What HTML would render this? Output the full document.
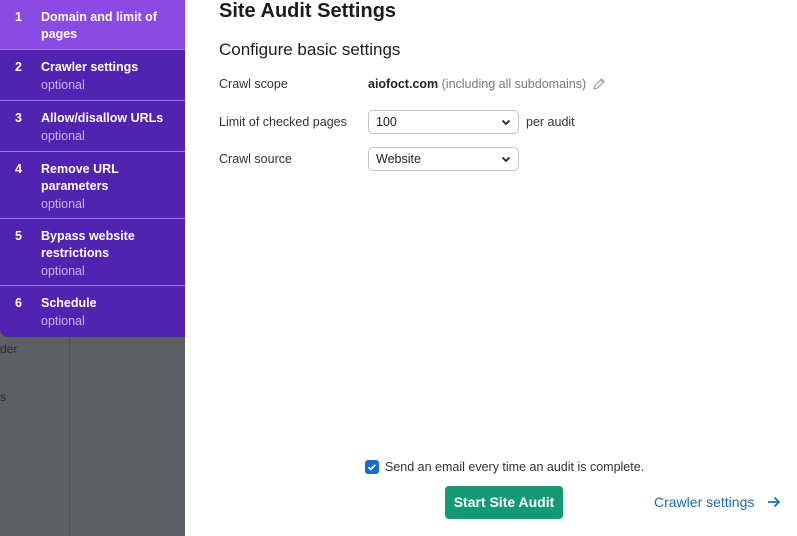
<!DOCTYPE html>
<html><head><meta charset="utf-8"><style>
*{margin:0;padding:0;box-sizing:border-box}
body{width:797px;height:536px;overflow:hidden;background:#fff;font-family:"Liberation Sans",sans-serif;position:relative}
.side{position:absolute;left:0;top:0;width:185px;height:536px;background:#5e5f62}
.vl{position:absolute;left:69px;top:337px;width:1px;height:199px;background:#4e4f52}
.gt{position:absolute;color:#2a2a2c;font-size:12px}
.panel{position:absolute;left:0;top:0;width:185px;height:337px;background:#5222b0;border-bottom-left-radius:8px;overflow:hidden}
.it{position:absolute;left:0;width:185px;border-bottom:1.5px solid #9c78e0;color:#fff}
.it .n{position:absolute;left:15px;top:10px;font-size:12.5px;font-weight:bold}
.it .t{position:absolute;left:41px;top:9px;font-size:12.5px;font-weight:bold;line-height:17px;width:140px}
.it .o{position:absolute;left:41px;font-size:12.5px;color:#c9b6f2}
h1{position:absolute;left:219px;top:0;font-size:20px;font-weight:bold;color:#1c1c1e}
h2{position:absolute;left:219px;top:40px;font-size:17px;font-weight:normal;color:#1c1c1e}
.lb{position:absolute;left:219px;font-size:12.5px;color:#333}
.sel{position:absolute;left:368px;width:151px;height:24px;border:1px solid #c4c4c8;border-radius:5px;font-size:12.5px;color:#222;padding:4px 7px}
.sel svg{position:absolute;right:7px;top:8px}
.btn{position:absolute;left:445px;top:486px;width:118px;height:33px;background:#139a74;border-radius:4px;color:#fff;font-size:14px;font-weight:bold;text-align:center;line-height:33px}
</style></head><body>
<div class="side">
<div class="vl"></div>
<div class="gt" style="left:0;top:342px">der</div>
<div class="gt" style="left:0;top:390px">s</div>
<div class="panel">
<div class="it" style="top:0;height:50px;background:#8a4be3"><span class="n">1</span><span class="t">Domain and limit of pages</span></div>
<div class="it" style="top:50px;height:51px"><span class="n">2</span><span class="t">Crawler settings</span><span class="o" style="top:28px">optional</span></div>
<div class="it" style="top:101px;height:51px"><span class="n">3</span><span class="t">Allow/disallow URLs</span><span class="o" style="top:28px">optional</span></div>
<div class="it" style="top:152px;height:67px"><span class="n">4</span><span class="t">Remove URL parameters</span><span class="o" style="top:45px">optional</span></div>
<div class="it" style="top:219px;height:67px"><span class="n">5</span><span class="t">Bypass website restrictions</span><span class="o" style="top:45px">optional</span></div>
<div class="it" style="top:286px;height:52px;border:none"><span class="n">6</span><span class="t">Schedule</span><span class="o" style="top:28px">optional</span></div>
</div></div>
<h1>Site Audit Settings</h1>
<h2>Configure basic settings</h2>
<div class="lb" style="top:77px">Crawl scope</div>
<div class="lb" style="left:368px;top:77px"><b style="color:#222">aiofoct.com</b> <span style="color:#777">(including all subdomains)</span>
<svg width="14" height="14" viewBox="0 0 14 14" style="vertical-align:-3px;margin-left:2px"><path d="M2 12l1-3.5L9.5 2 12 4.5 5.5 11z M8.5 3l2.5 2.5" fill="none" stroke="#999" stroke-width="1.1"/></svg></div>
<div class="lb" style="top:115px">Limit of checked pages</div>
<div class="sel" style="top:110px">100<svg width="10" height="7" viewBox="0 0 10 7"><path d="M1.5 1.5l3.5 3.5 3.5-3.5" fill="none" stroke="#222" stroke-width="1.7"/></svg></div>
<div class="lb" style="left:526px;top:115px">per audit</div>
<div class="lb" style="top:152px">Crawl source</div>
<div class="sel" style="top:147px">Website<svg width="10" height="7" viewBox="0 0 10 7"><path d="M1.5 1.5l3.5 3.5 3.5-3.5" fill="none" stroke="#222" stroke-width="1.7"/></svg></div>
<div style="position:absolute;left:365px;top:460px;width:14px;height:14px;background:#1a6ad0;border-radius:3px"><svg width="14" height="14" viewBox="0 0 14 14"><path d="M3.5 7.2l2.3 2.2 4.5-4.6" fill="none" stroke="#fff" stroke-width="1.7"/></svg></div>
<div class="lb" style="left:385px;top:460px;color:#333">Send an email every time an audit is complete.</div>
<div class="btn">Start Site Audit</div>
<div style="position:absolute;left:654px;top:494px;font-size:14px;color:#1a6bb0">Crawler settings</div>
<svg style="position:absolute;left:767px;top:496px" width="14" height="12" viewBox="0 0 14 12"><path d="M1 6h11M7.5 1.5L12 6l-4.5 4.5" fill="none" stroke="#1a6bb0" stroke-width="1.7"/></svg>
</body></html>
